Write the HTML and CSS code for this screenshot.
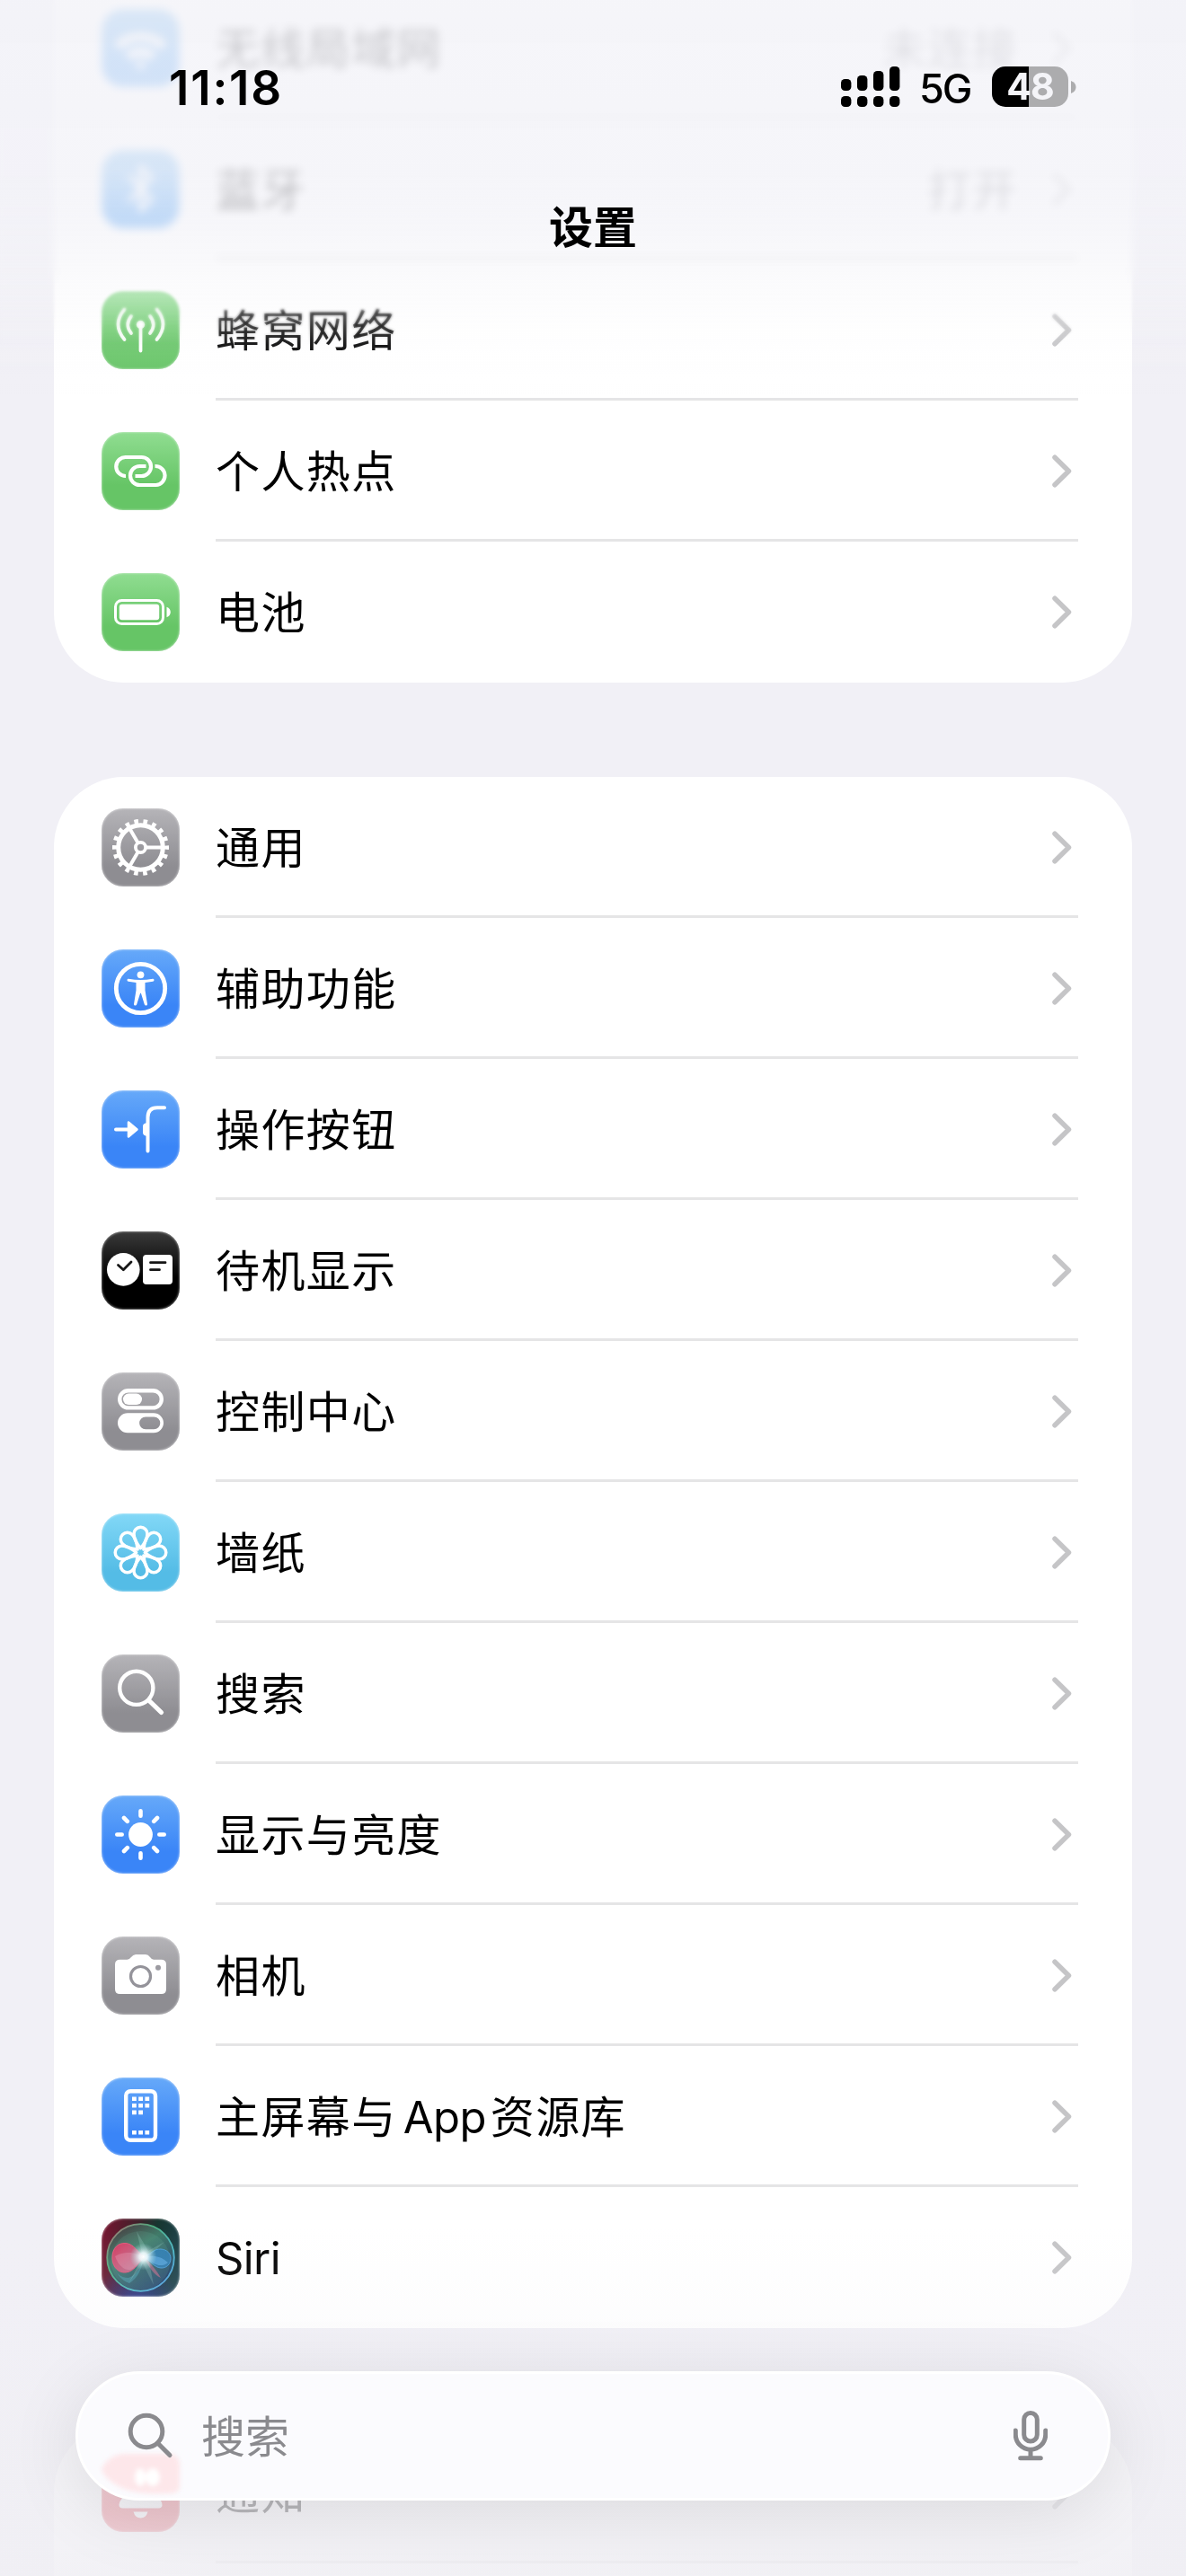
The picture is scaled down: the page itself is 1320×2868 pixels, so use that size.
FILE: index.html
```html
<!DOCTYPE html>
<html lang="zh-CN">
<head>
<meta charset="utf-8">
<title>设置</title>
<link rel="stylesheet" href="styles.css">
</head>
<body>
<svg class="defs" width="0" height="0">
  <symbol id="chev" viewBox="0 0 22 37"><path d="M3 3.200L18.500 18.500L3 33.800" fill="none" stroke="currentColor" stroke-width="5.500" stroke-linecap="round" stroke-linejoin="round"/></symbol>
</svg>
<div class="screen">
  <main class="list">
    <section class="card card-top">
      <div class="row"><span class="icon sky"><svg viewBox="0 0 87 87"><path d="M14 38a43 43 0 0 1 59 0l-7 7a32 32 0 0 0-45 0zM26 50a25 25 0 0 1 35 0l-7 7a15 15 0 0 0-21 0zM37 61a10 10 0 0 1 13 0l-6.500 7z" fill="#fff"/></svg></span><div class="body"><span class="label">无线局域网</span><span class="value">未连接</span><svg class="chev"><use href="#chev"/></svg></div></div>
      <div class="row"><span class="icon sky"><svg viewBox="0 0 87 87"><path class="s" stroke-width="4.500" d="M31 30L56 55L43.500 67V19L56 31L31 56"/></svg></span><div class="body"><span class="label">蓝牙</span><span class="value">打开</span><svg class="chev"><use href="#chev"/></svg></div></div>
      <div class="row"><span class="icon green"><svg viewBox="0 0 87 87"><g class="s" stroke-width="3.800"><path d="M25.500 20.500Q11.500 37 25.500 54M61.500 20.500Q75.500 37 61.500 54M33 28Q25.500 37.500 33 47M54 28Q61.500 37.500 54 47M43.500 40V66.500"/></g><circle cx="43.500" cy="37.500" r="4.700" fill="#fff"/></svg></span><div class="body"><span class="label">蜂窝网络</span><svg class="chev"><use href="#chev"/></svg></div></div>
      <div class="row"><span class="icon green"><svg viewBox="0 0 87 87"><path class="s butt" stroke-width="4.200" d="M27 49A10.500 10.500 0 0 1 26.500 28H44.500a10.500 10.500 0 0 1 0 21H37.500M49.500 38H42.500a10.500 10.500 0 0 0 0 21H60.500a10.500 10.500 0 0 0-1-21"/></svg></span><div class="body"><span class="label">个人热点</span><svg class="chev"><use href="#chev"/></svg></div></div>
      <div class="row"><span class="icon green"><svg viewBox="0 0 87 87"><rect class="s" stroke-width="3" x="15.500" y="30.500" width="53" height="26" rx="7"/><rect x="19.800" y="34.800" width="44.400" height="17.400" rx="3" fill="#fff"/><path d="M72.500 37.700q4.300 1.800 4.300 5.800t-4.300 5.800z" fill="#fff"/></svg></span><div class="body"><span class="label">电池</span><svg class="chev"><use href="#chev"/></svg></div></div>
    </section>

    <section class="card">
      <div class="row"><span class="icon gray"><svg viewBox="0 0 87 87"><circle class="s" cx="43.500" cy="43.500" r="24.800" stroke-width="5"/><circle class="s butt" cx="43.500" cy="43.500" r="29" stroke-width="5" stroke-dasharray="4.600 5.523" stroke-dashoffset="2.300"/><circle class="s" cx="43.500" cy="43.500" r="5.600" stroke-width="3.800"/><path class="s butt" stroke-width="4" d="M50 43.500H68M40.200 37.800L31 22M40.200 49.200L31 65"/></svg></span><div class="body"><span class="label">通用</span><svg class="chev"><use href="#chev"/></svg></div></div>
      <div class="row"><span class="icon blue"><svg viewBox="0 0 87 87"><circle class="s" cx="43.500" cy="43.500" r="27.200" stroke-width="4.800"/><circle cx="43.500" cy="28.300" r="3.900" fill="#fff"/><path fill="#fff" d="M30 32.800Q43.500 35.200 57 32.800q1.500 0 1.500 1.400t-1.400 1.500l-8.600 1.400v8.500L51 61q0 1.600-1.400 1.600t-1.800-1.400L43.900 48.700h-.8L39.200 61.200q-.4 1.400-1.800 1.400T36 61l2.500-15.400v-8.500l-8.600-1.400q-1.400-.1-1.400-1.500T30 32.800z"/></svg></span><div class="body"><span class="label">辅助功能</span><svg class="chev"><use href="#chev"/></svg></div></div>
      <div class="row"><span class="icon blue"><svg viewBox="0 0 87 87"><path class="s" stroke-width="4" d="M16 43.500H30M70 19.200H62Q51.500 19.200 51.500 30V67.500"/><path d="M30 35.500L39.500 43.500L30 51.500z" fill="#fff" stroke="#fff" stroke-width="2.500" stroke-linejoin="round"/><path d="M50 36.300Q46 37 46 40v7q0 3 4 3.700z" fill="#fff"/></svg></span><div class="body"><span class="label">操作按钮</span><svg class="chev"><use href="#chev"/></svg></div></div>
      <div class="row"><span class="icon black"><svg viewBox="0 0 87 87"><circle cx="24.300" cy="42.400" r="18.300" fill="#fff"/><rect x="46" y="26" width="33" height="33" rx="4" fill="#fff"/><path d="M18.500 37.500L24.300 42.700L33 34M54.500 34.700H71M54.500 42.700H64.500" fill="none" stroke="#161616" stroke-width="2.800" stroke-linecap="round" stroke-linejoin="round"/></svg></span><div class="body"><span class="label">待机显示</span><svg class="chev"><use href="#chev"/></svg></div></div>
      <div class="row"><span class="icon gray"><svg viewBox="0 0 87 87"><rect class="s" stroke-width="4.400" x="20.200" y="20.200" width="46.600" height="19.200" rx="9.600"/><rect x="24" y="23.600" width="21" height="12.400" rx="6.200" fill="#fff"/><path fill="#fff" fill-rule="evenodd" d="M29 45.300H58a11 11 0 0 1 0 22H29a11 11 0 0 1 0-22zM49 49.400a6.900 6.900 0 0 0 0 13.800h9.400a6.900 6.900 0 0 0 0-13.800z"/></svg></span><div class="body"><span class="label">控制中心</span><svg class="chev"><use href="#chev"/></svg></div></div>
      <div class="row"><span class="icon cyan"><svg viewBox="0 0 87 87"><defs><path id="petal" d="M0-4.800C-3.500-9-7.500-14-7.500-20.800a7.500 7.500 0 0 1 15 0C7.500-14 3.500-9 0-4.800z"/></defs><g class="s" stroke-width="3.500" transform="translate(43.500 43.500)"><use href="#petal"/><use href="#petal" transform="rotate(45)"/><use href="#petal" transform="rotate(90)"/><use href="#petal" transform="rotate(135)"/><use href="#petal" transform="rotate(180)"/><use href="#petal" transform="rotate(225)"/><use href="#petal" transform="rotate(270)"/><use href="#petal" transform="rotate(315)"/></g></svg></span><div class="body"><span class="label">墙纸</span><svg class="chev"><use href="#chev"/></svg></div></div>
      <div class="row"><span class="icon gray"><svg viewBox="0 0 87 87"><circle class="s" cx="38.800" cy="37.300" r="18.600" stroke-width="4.400"/><path class="s" stroke-width="5.200" d="M53 51.500L66.500 64.500"/></svg></span><div class="body"><span class="label">搜索</span><svg class="chev"><use href="#chev"/></svg></div></div>
      <div class="row"><span class="icon blue"><svg viewBox="0 0 87 87"><circle cx="43.500" cy="43.500" r="13.400" fill="#fff"/><path class="s" stroke-width="4.600" d="M43.500 17.300V22.700M43.500 64.300V69.700M17.300 43.500H22.700M64.300 43.500H69.700M25 25L28.800 28.800M58.200 58.200L62 62M25 62L28.800 58.200M58.200 28.800L62 25"/></svg></span><div class="body"><span class="label">显示与亮度</span><svg class="chev"><use href="#chev"/></svg></div></div>
      <div class="row"><span class="icon gray"><svg viewBox="0 0 87 87"><path fill="#fff" d="M20.500 25.700H28.500Q31 25.700 33 23T38 20H49Q52 20 54 23T58.500 25.700H66.500q5.500 0 5.500 5.500V58.500q0 5.500-5.500 5.500H20.500Q15 64 15 58.500V31.200q0-5.500 5.500-5.500z"/><circle cx="43.500" cy="44.500" r="11" fill="none" stroke="#94939a" stroke-width="3.200"/><circle cx="63" cy="34.700" r="3" fill="#9c9ba1"/></svg></span><div class="body"><span class="label">相机</span><svg class="chev"><use href="#chev"/></svg></div></div>
      <div class="row"><span class="icon blue"><svg viewBox="0 0 87 87"><rect class="s" stroke-width="4.400" x="27.200" y="15.200" width="32.800" height="54.600" rx="5"/><path fill="#fff" d="M34 21.500h4.800v4.600h-4.800zM41.200 21.500h4.800v4.600h-4.800zM48.400 21.500h4.800v4.600h-4.800zM34 29h4.800v4.600h-4.800zM41.200 29h4.800v4.600h-4.800zM48.400 29h4.800v4.600h-4.800zM34 36.600h4.800v4.600h-4.800zM41.200 36.600h4.800v4.600h-4.800zM34 59h4.800v4.600h-4.800zM41.200 59h4.800v4.600h-4.800zM48.400 59h4.800v4.600h-4.800z"/></svg></span><div class="body"><span class="label">主屏幕与<span class="latin app"> App</span>资源库</span><svg class="chev"><use href="#chev"/></svg></div></div>
      <div class="row"><span class="icon siri"><svg viewBox="0 0 87 87">
        <defs>
          <radialGradient id="glow"><stop offset="0" stop-color="#fff"/><stop offset=".3" stop-color="#f0fdff" stop-opacity=".9"/><stop offset="1" stop-color="#9fd8d8" stop-opacity="0"/></radialGradient>
          <linearGradient id="ring" x1="0" y1="0" x2="1" y2="1"><stop offset="0" stop-color="#b06a72"/><stop offset=".35" stop-color="#4fae80"/><stop offset=".7" stop-color="#4cb8c8"/><stop offset="1" stop-color="#4f8fe8"/></linearGradient>
          <linearGradient id="orb" x1="0" y1="0" x2=".6" y2="1"><stop offset="0" stop-color="#4a3038"/><stop offset=".45" stop-color="#3f7a68"/><stop offset="1" stop-color="#1d3c66"/></linearGradient>
          <linearGradient id="pink" x1="0" y1="0" x2="1" y2="1"><stop offset="0" stop-color="#e23560"/><stop offset="1" stop-color="#c07f9c"/></linearGradient>
        </defs>
        <circle cx="43.500" cy="43.500" r="37" fill="url(#orb)"/>
        <circle cx="43.500" cy="47" r="33" fill="#7fd0b4" opacity=".12"/>
        <path d="M13 50Q16 66 30 66Q42 62 47 43Q44 64 31 72Q18 68 13 50z" fill="#4a9aa8" opacity=".6"/>
        <path d="M47 43C38 34 34 27 25 27.500C15 28 11.500 37 12 45C12.500 54 19 61 27 60C36 59 40 51 47 43z" fill="url(#pink)" opacity=".92" stroke="#f0557c" stroke-width="1"/>
        <path d="M47 43C40 38 26 35 15 42C20 56 30 60 36 55C41 51 43 46 47 43z" fill="#f0b0c4" opacity=".28"/>
        <path d="M47 43C54 40 58 33.500 66 34C73 34.500 77 39 77 44.500C77 51 72 55.500 66 55C58 54.500 54 46 47 43z" fill="#2f7fb4" opacity=".9" stroke="#4aa0dc" stroke-width="1"/>
        <path d="M47 43C56 40 67 42 74 49C66 56 56 50 47 43z" fill="#69b7f2" opacity=".5"/>
        <path d="M46 41Q60 55 66 66Q56 62 46 41z" fill="#c86a8a" opacity=".6"/>
        <path d="M46 43L39 14L52 36L70 26L52 43L58 74L46 50L30 72z" fill="#b9efe4" opacity=".2"/>
        <circle cx="46.500" cy="42.500" r="15" fill="url(#glow)"/>
        <circle cx="43.500" cy="43.500" r="37.300" fill="none" stroke="url(#ring)" stroke-width="1.800"/>
      </svg></span><div class="body"><span class="label latin">Siri</span><svg class="chev"><use href="#chev"/></svg></div></div>
    </section>

    <section class="card">
      <div class="row"><span class="icon red"><svg viewBox="0 0 87 87"><path fill="#fff" d="M43.500 15q-16 2-17 20-1 12-6 18-3 7 3 7.500H63.500q6-.5 3-7.500-5-6-6-18-1-18-17-20zM35.500 64.500H51.500q-2 7-8 7t-8-7z"/></svg></span><div class="body"><span class="label">通知</span><svg class="chev"><use href="#chev"/></svg></div></div>
      <div class="row"></div>
    </section>
  </main>

  <div class="blur blur-strong"></div>
  <div class="blur blur-soft"></div>
  <header class="top">
    <div class="status">
      <span class="time">11:18</span>
      <div class="indicators">
        <svg class="signal" viewBox="0 0 66 45"><rect x="0" y="14" width="11.400" height="13" rx="4.500"/><rect x="18" y="10" width="11.400" height="17" rx="4.500"/><rect x="36" y="5" width="11.400" height="22" rx="4.500"/><rect x="54" y="0" width="11.400" height="27" rx="4.500"/><rect x="0" y="33" width="11.400" height="12" rx="4.500"/><rect x="18" y="33" width="11.400" height="12" rx="4.500"/><rect x="36" y="33" width="11.400" height="12" rx="4.500"/><rect x="54" y="33" width="11.400" height="12" rx="4.500"/></svg>
        <span class="net">5G</span>
        <span class="battery">48</span>
        <svg class="tip" viewBox="0 0 6 14"><path d="M0 0Q5.500 2 5.500 7T0 14z" fill="#acacae"/></svg>
      </div>
    </div>
    <h1 class="title">设置</h1>
  </header>

  <div class="fade"></div>
  <div class="search">
    <svg class="ghost" viewBox="0 0 120 60"><path d="M3 20Q12 5 28 4H78Q90 4 90 18V40Q90 49 76 48Q40 50 22 40Q4 30 3 20z" fill="#fde7ea"/><ellipse cx="46" cy="30" rx="6" ry="10" fill="#fff"/><ellipse cx="60" cy="30" rx="8" ry="10" fill="#fff"/></svg>
    <svg class="glass" viewBox="0 0 52 52"><circle cx="21" cy="21" r="17.800"/><path d="M34 34.500L47 47.500"/></svg>
    <span class="placeholder">搜索</span>
    <svg class="mic" viewBox="0 0 38 56"><rect x="11.700" y="2.500" width="14.600" height="31.500" rx="7.300"/><path d="M2.300 22V26.500A16.700 16.700 0 0 0 35.700 26.500V22M19 43.500V52M7.700 52.700H30.300"/></svg>
  </div>
</div>
</body>
</html>
```
FILE: styles.css
```css
* { box-sizing: border-box; }
body {
  margin: 0;
  background: #f1f0f6;
  font-family: Inter, "Noto Sans CJK SC", sans-serif;
  color: #000;
}
.defs { position: absolute; }
.screen {
  position: relative;
  width: 1320px;
  height: 2868px;
  overflow: hidden;
  background: #f1f0f6;
}

/* Settings list */
.list {
  display: flex;
  flex-direction: column;
  gap: 105px;
  margin-top: -25px;
  padding: 0 60px;
}
.card {
  background: #fff;
  border-radius: 78px;
}
.card-top { border-radius: 0 0 78px 78px; }
.row {
  display: flex;
  align-items: center;
  height: 157px;
  padding: 0 60px 0 53px;
}
.icon {
  width: 87px;
  height: 87px;
  flex: none;
  border-radius: 24px;
  overflow: hidden;
  box-shadow: inset 0 0 2px 1px rgba(255, 255, 255, .35);
}
.icon svg { display: block; width: 87px; height: 87px; }
.s { fill: none; stroke: #fff; stroke-linecap: round; stroke-linejoin: round; }
.butt { stroke-linecap: butt; }
.green { background: linear-gradient(#90dd91, #66c566 68%); }
.blue { background: linear-gradient(#66a9f9, #3a85f7 72%); }
.sky { background: linear-gradient(#66b0ee, #3f98f4 72%); }
.gray { background: linear-gradient(#b5b4b8, #8e8d92 75%); }
.black { background: linear-gradient(#3a3a3a, #000 60%); }
.cyan { background: linear-gradient(#82d8f7, #54bce6 75%); }
.red { background: linear-gradient(#f5707c, #e5404e 75%); }
.siri {
  background:
    radial-gradient(circle at 45% 110%, #2a3594 0, transparent 45%),
    linear-gradient(100deg, #7a1430 0, #40202a 40%, #173630 62%, #1d4450 100%);
}
.body {
  display: flex;
  align-items: center;
  flex: 1;
  height: 157px;
  margin-left: 40px;
  padding-right: 7px;
  box-shadow: inset 0 -3px #e5e5e6;
}
.row:last-child .body { box-shadow: none; }
.label {
  flex: 1;
  padding-top: 2px;
  font-size: 49px;
  line-height: 60px;
  letter-spacing: 1.4px;
  white-space: pre;
}
.latin { letter-spacing: -.6px; }
.app { margin-right: 5px; word-spacing: -6px; }
.value {
  margin-right: 38px;
  padding-top: 2px;
  font-size: 49px;
  line-height: 60px;
  letter-spacing: 1.4px;
  color: #8a8a8e;
}
.chev { width: 22px; height: 37px; color: #c5c5c7; }

/* Navigation bar over the scrolled rows */
.blur { position: absolute; left: 0; right: 0; top: 0; }
.blur-strong {
  height: 320px;
  backdrop-filter: blur(5px);
  mask-image: linear-gradient(#000 292px, transparent);
}
.blur-soft {
  height: 385px;
  backdrop-filter: blur(1.500px);
  mask-image: linear-gradient(#000 340px, transparent);
}
.top {
  position: absolute;
  inset: 0 0 auto;
  height: 440px;
  background: linear-gradient(
    rgba(243, 243, 248, .82) 0,
    rgba(243, 243, 248, .81) 190px,
    rgba(243, 243, 248, .72) 250px,
    rgba(244, 244, 248, .54) 290px,
    rgba(246, 246, 249, .36) 325px,
    rgba(248, 248, 250, .14) 365px,
    rgba(250, 250, 252, 0) 440px);
}
.status {
  display: flex;
  justify-content: space-between;
  align-items: center;
  height: 119px;
  padding: 74px 122px 0 188px;
}
.time { padding-top: 3px; font-size: 53px; font-weight: 600; line-height: 45px; letter-spacing: 1.8px; }
.indicators { display: flex; align-items: center; height: 45px; }
.signal { width: 66px; height: 45px; }
.net { width: 60px; margin-left: 21px; padding-top: 3px; font-size: 45px; font-weight: 500; line-height: 45px; letter-spacing: -2px; }
.battery {
  width: 85px;
  height: 45px;
  margin-left: 21px;
  border-radius: 15px;
  background: linear-gradient(90deg, #000 41px, #acacae 41px);
  color: #f4f4f8;
  font-size: 41px;
  font-weight: 700;
  line-height: 45px;
  letter-spacing: -1px;
  text-align: center;
}
.tip { width: 6px; height: 14px; margin-left: 3px; }
.title {
  margin: 105px 0 0;
  font-size: 49px;
  font-weight: 600;
  line-height: 60px;
  text-align: center;
}

/* Search field floating at the bottom */
.fade {
  position: absolute;
  inset: auto 0 0;
  height: 388px;
  background: linear-gradient(
    rgba(240, 239, 244, 0) 0,
    rgba(240, 239, 244, .16) 112px,
    rgba(240, 239, 244, .72) 240px,
    rgba(240, 239, 244, .76) 310px,
    rgba(240, 239, 244, .86) 100%);
}
.search {
  position: absolute;
  left: 84px;
  right: 84px;
  bottom: 84px;
  height: 144px;
  display: flex;
  align-items: center;
  padding: 0 67px 0 54px;
  border: 3px solid #fff;
  border-radius: 72px;
  background: #fbfbfe;
  box-shadow: 0 14px 80px rgba(0, 0, 0, .1);
}
.ghost {
  position: absolute;
  left: 23px;
  top: 85px;
  width: 120px;
  height: 60px;
  filter: blur(2.500px);
}
.glass, .mic { position: relative; fill: none; stroke: #8a8a8e; stroke-width: 5; stroke-linecap: round; }
.glass { width: 52px; height: 52px; margin-left: 1px; }
.placeholder { position: relative; flex: 1; margin-left: 30px; padding-top: 3px; font-size: 49px; line-height: 60px; color: #8a8a8e; }
.mic { width: 38px; height: 56px; }
```
